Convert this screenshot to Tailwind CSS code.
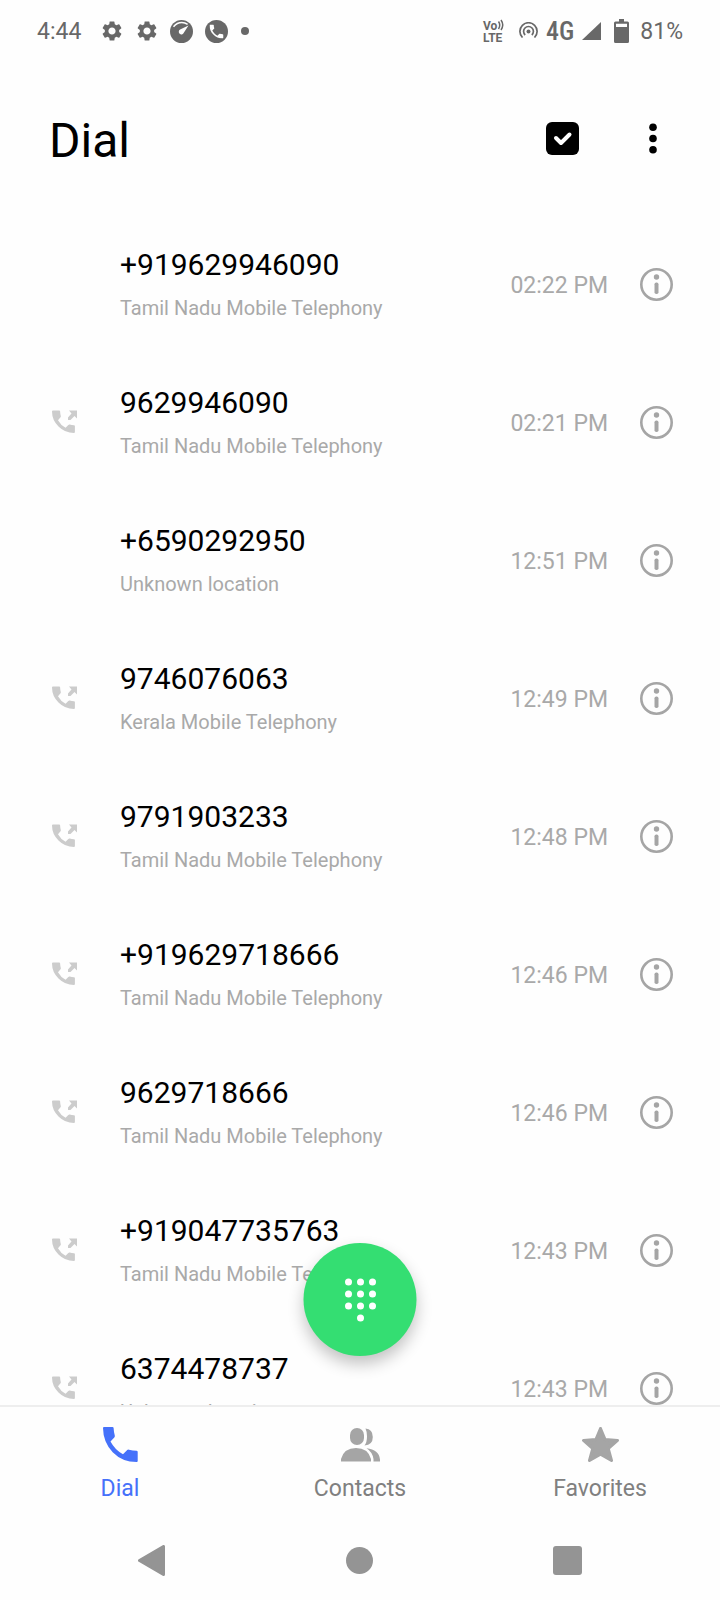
<!DOCTYPE html>
<html lang="en">
<head>
<meta charset="utf-8">
<meta name="viewport" content="width=device-width, initial-scale=1">
<title>Dial</title>
<script src="https://cdn.jsdelivr.net/npm/@tailwindcss/browser@4"></script>
</head>
<body class="flex h-screen flex-col overflow-hidden bg-[#fefefe] font-[Roboto,sans-serif] text-black">

<svg class="hidden" aria-hidden="true">
  <symbol id="gear" viewBox="2 2 20 20"><path d="M19.14 12.94c.04-.3.06-.61.06-.94 0-.32-.02-.64-.07-.94l2.03-1.58a.49.49 0 0 0 .12-.61l-1.92-3.32a.488.488 0 0 0-.59-.22l-2.39.96c-.5-.38-1.03-.7-1.62-.94l-.36-2.54a.484.484 0 0 0-.48-.41h-3.84c-.24 0-.43.17-.47.41l-.36 2.54c-.59.24-1.13.57-1.62.94l-2.39-.96c-.22-.08-.47 0-.59.22L2.74 8.87c-.12.21-.08.47.12.61l2.03 1.58c-.05.3-.09.63-.09.94s.02.64.07.94l-2.03 1.58a.49.49 0 0 0-.12.61l1.92 3.32c.12.22.37.29.59.22l2.39-.96c.5.38 1.03.7 1.62.94l.36 2.54c.05.24.24.41.48.41h3.84c.24 0 .44-.17.47-.41l.36-2.54c.59-.24 1.13-.56 1.62-.94l2.39.96c.22.08.47 0 .59-.22l1.92-3.32c.12-.22.07-.47-.12-.61l-2.01-1.58zM12 15.6c-1.98 0-3.6-1.62-3.6-3.6s1.62-3.6 3.6-3.6 3.6 1.62 3.6 3.6-1.62 3.6-3.6 3.6z"/></symbol>
  <symbol id="handset" viewBox="3 3 18 18"><path d="M6.62 10.79c1.44 2.83 3.76 5.14 6.59 6.59l2.2-2.2c.27-.27.67-.36 1.02-.24 1.12.37 2.33.57 3.57.57.55 0 1 .45 1 1V20c0 .55-.45 1-1 1-9.39 0-17-7.61-17-17 0-.55.45-1 1-1h3.5c.55 0 1 .45 1 1 0 1.25.2 2.45.57 3.57.11.35.03.74-.25 1.02l-2.2 2.2z"/></symbol>
  <symbol id="outgoing" viewBox="0 0 25 24">
    <path d="M1 .5h6.200q.8 0 .9.800.1 2.700.7 4.600.2.800-.3 1.400L6 10.200q2.700 5 7.600 7.500l2.700-2.700q.6-.6 1.400-.4 2.100.6 4.300.7.9.1.9.900V22q0 1-1 1Q13 23 6.500 16.500T0 1.500q0-1 1-1z"/>
    <path d="M17 .5h8v8l-2.500-2.500-4 4h-2.500v-2.500l3.500-4z"/>
  </symbol>
  <symbol id="info" viewBox="0 0 33 33">
    <circle cx="16.500" cy="16.500" r="15.200" fill="none" stroke="currentColor" stroke-width="2.600"/>
    <circle cx="16.500" cy="9" r="2.700"/>
    <rect x="14.500" y="14.500" width="4" height="11.500" rx="1.800"/>
  </symbol>
</svg>

<div class="flex h-[62px] shrink-0 items-center justify-between px-[37px] text-[23px] leading-7 text-[#686868]">
  <div class="flex items-center">
    <span class="pt-0.5">4:44</span>
    <svg class="ml-[21px] size-5 fill-current"><use href="#gear"/></svg>
    <svg class="ml-[15px] size-5 fill-current"><use href="#gear"/></svg>
    <svg class="ml-[13px] size-[23px]" viewBox="0 0 23 23">
      <circle cx="11.500" cy="11.500" r="11.500" fill="currentColor"/>
      <path d="M3.500 6.800Q7 2.600 11.800 2.600q3.200 0 5.800 1.700" fill="none" stroke="#fefefe" stroke-width="1.500"/>
      <path d="M18.500 5.500 13.800 12.800a2.600 2.600 0 1 1-3.700-3.200z" fill="#fefefe"/>
    </svg>
    <svg class="ml-3 size-[23px]" viewBox="0 0 23 23">
      <circle cx="11.500" cy="11.500" r="11.500" fill="currentColor"/>
      <use href="#handset" x="4.500" y="4.500" width="14" height="14" fill="#fefefe"/>
    </svg>
    <span class="ml-[13px] size-2 rounded-full bg-current"></span>
  </div>
  <div class="flex items-center">
    <svg class="h-6 w-[22px] overflow-visible fill-current font-[Roboto,sans-serif] font-bold" viewBox="0 0 22 24" role="img" aria-label="VoLTE">
      <text x="0" y="11" font-size="12">Vo</text>
      <text x="0" y="23" font-size="12">LTE</text>
      <path d="M15.500 2.500q2.500 3.500 0 7.500M18 1q3.500 5 0 10" fill="none" stroke="currentColor" stroke-width="1.500"/>
    </svg>
    <svg class="mb-[3px] ml-3.5 h-4 w-[19px]" viewBox="0 0 19 16" fill="none" stroke="currentColor" stroke-width="1.700">
      <circle cx="9.500" cy="9.500" r="2" fill="currentColor" stroke="none"/>
      <path d="M3.500 15.500a8.600 8.600 0 1 1 12 0M6.200 13a4.900 4.900 0 1 1 6.600 0"/>
    </svg>
    <span class="ml-2 font-['Roboto_Condensed','Liberation_Sans_Narrow',Roboto,sans-serif] text-[26px] font-medium">4G</span>
    <svg class="ml-2 h-[18px] w-[19px] fill-current" viewBox="0 0 19 18"><path d="M19 0v18H0z"/></svg>
    <svg class="ml-[13px] h-6 w-[15px]" viewBox="0 0 15 24"><path fill="currentColor" fill-rule="evenodd" d="M5 0h5v2.500h3.500Q15 2.500 15 4v18.500q0 1.500-1.500 1.500h-12Q0 24 0 22.500V4q0-1.500 1.500-1.500H5zM2 4.700V8h11V4.700z"/></svg>
    <span class="ml-[11px] pt-0.5">81%</span>
  </div>
</div>

<header class="flex h-[153px] shrink-0 items-start justify-between pt-[49px] pr-[47px] pl-[49px]">
  <h1 class="pt-0.5 text-[48px] leading-[56px]">Dial</h1>
  <div class="flex items-center pt-[11px]">
    <button type="button" aria-label="Select calls">
      <svg class="size-[33px]" viewBox="0 0 33 33"><rect width="33" height="33" rx="6"/><path d="m10 16 5 5 8.500-8.500" fill="none" stroke="#fff" stroke-width="4" stroke-linecap="round" stroke-linejoin="round"/></svg>
    </button>
    <button type="button" class="ml-[54px] w-10" aria-label="More options">
      <svg class="mx-auto h-[31px] w-2" viewBox="0 0 8 31"><circle cx="4" cy="4.200" r="3.800"/><circle cx="4" cy="15.500" r="3.800"/><circle cx="4" cy="26.800" r="3.800"/></svg>
    </button>
  </div>
</header>

<main class="relative min-h-0 flex-1">
  <ul id="calls" class="h-full overflow-hidden"></ul>
  <button type="button" aria-label="Open keypad" class="absolute bottom-[49px] left-1/2 flex size-[113px] -translate-x-1/2 items-center justify-center rounded-full bg-[#34de72] shadow-[0_8px_16px_rgba(0,0,0,0.24)]">
    <svg class="h-11 w-8 fill-white" viewBox="0 0 32 44">
      <circle cx="4" cy="4" r="3.500"/><circle cx="16" cy="4" r="3.500"/><circle cx="28" cy="4" r="3.500"/>
      <circle cx="4" cy="16" r="3.500"/><circle cx="16" cy="16" r="3.500"/><circle cx="28" cy="16" r="3.500"/>
      <circle cx="4" cy="28" r="3.500"/><circle cx="16" cy="28" r="3.500"/><circle cx="28" cy="28" r="3.500"/>
      <circle cx="16" cy="40" r="3.500"/>
    </svg>
  </button>
</main>

<nav class="grid h-[115px] shrink-0 grid-cols-3 border-t-2 border-[#eeeeee] text-[23px] leading-7 text-[#808080]">
  <a href="#dial" aria-current="page" class="flex flex-col items-center pt-5 text-[#4571fa]">
    <svg class="h-[35px] w-[35px] fill-current" viewBox="0 0 35 35"><path d="M1 0h8.500q1 0 1.100 1 .2 4 1.200 7.500.3 1.200-.5 2L7.500 14.500q4.500 8.500 12.500 12.700l4-4q.8-.8 1.900-.5 4 1 7.600 1.100 1.200.1 1.200 1.200V34q0 1-1 1-14.500 0-24-9.800T0 1q0-1 1-1z"/></svg>
    <span class="mt-[13px]">Dial</span>
  </a>
  <a href="#contacts" class="flex flex-col items-center pt-5">
    <svg class="h-[35px] w-[39px] fill-[#a5a5a5]" viewBox="0 0 39 35">
      <rect x="9" y="1" width="14" height="17" rx="7"/>
      <path d="M24.500 1.500q7.300.5 7.300 8.500t-8.300 8.500q2.500-3 2.500-9 0-5-1.500-8z"/>
      <path d="M0 34.500v-2.500Q3 21 15 21t15 11v2.500zM25.500 21.200Q38 22.500 39 32.500v2h-6.500v-2.500Q31.500 25 25.500 21.200z"/>
    </svg>
    <span class="mt-[13px]">Contacts</span>
  </a>
  <a href="#favorites" class="flex flex-col items-center pt-5">
    <svg class="h-[35px] w-[37px] fill-[#a5a5a5] stroke-[#a5a5a5]" viewBox="0 0 37 35"><path d="m18.500 1.500 4.600 11 12.400.9-9.300 8.100 3.300 12-11-6.200-11 6.200 3.300-12-9.300-8.100 12.400-.9z" stroke-width="3" stroke-linejoin="round"/></svg>
    <span class="mt-[13px]">Favorites</span>
  </a>
</nav>

<div class="flex h-20 shrink-0 items-center justify-between px-[138px] text-[#949494]">
  <button type="button" aria-label="Back"><svg class="h-[31px] w-[27px] fill-current stroke-current" viewBox="0 0 27 31"><path d="M1.500 15.500 25.500 1.500v28z" stroke-width="3" stroke-linejoin="round"/></svg></button>
  <button type="button" aria-label="Home" class="size-[27px] rounded-full bg-current"></button>
  <button type="button" aria-label="Recent apps" class="size-[29px] rounded-[3px] bg-current"></button>
</div>

<script>
  const TN = "Tamil Nadu Mobile Telephony";
  const calls = [
    { number: "+919629946090", place: TN, time: "02:22 PM", outgoing: false },
    { number: "9629946090", place: TN, time: "02:21 PM", outgoing: true },
    { number: "+6590292950", place: "Unknown location", time: "12:51 PM", outgoing: false },
    { number: "9746076063", place: "Kerala Mobile Telephony", time: "12:49 PM", outgoing: true },
    { number: "9791903233", place: TN, time: "12:48 PM", outgoing: true },
    { number: "+919629718666", place: TN, time: "12:46 PM", outgoing: true },
    { number: "9629718666", place: TN, time: "12:46 PM", outgoing: true },
    { number: "+919047735763", place: TN, time: "12:43 PM", outgoing: true },
    { number: "6374478737", place: "Unknown location", time: "12:43 PM", outgoing: true }
  ];
  document.getElementById("calls").innerHTML = calls.map(c => `
    <li class="flex h-[138px] items-center pr-[47px] pl-[52px]">
      <div class="w-[68px] shrink-0">
        ${c.outgoing ? '<svg class="h-6 w-[25px] fill-[#cccccc]" role="img" aria-label="Outgoing call"><use href="#outgoing"/></svg>' : ''}
      </div>
      <div class="min-w-0 flex-1">
        <div class="text-[30px] leading-9">${c.number}</div>
        <div class="mt-3 text-[20px] leading-[26px] text-[#a9a9a9]">${c.place}</div>
      </div>
      <time class="pt-1 text-[23px] leading-7 text-[#a9a9a9]">${c.time}</time>
      <button type="button" class="ml-8 text-[#a5a5a5]" aria-label="Details for ${c.number}">
        <svg class="size-[33px] fill-current"><use href="#info"/></svg>
      </button>
    </li>`).join("");
</script>
</body>
</html>
